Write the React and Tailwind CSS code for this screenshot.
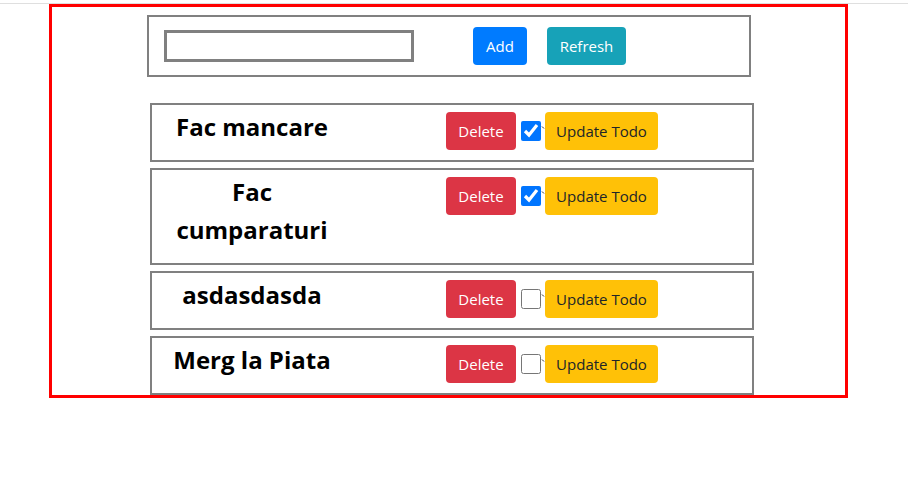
import { useState } from "react";

const initialTodos = [
  { id: 1, title: "Fac mancare", done: true },
  { id: 2, title: "Fac cumparaturi", done: true },
  { id: 3, title: "asdasdasda", done: false },
  { id: 4, title: "Merg la Piata", done: false },
];

function TodoRow({ todo, onToggle }) {
  return (
    <div className="ml-[98px] w-[604px] border-2 border-[#808080] flex items-start">
      {/* title column */}
      <h4 className="ml-[10px] w-[180px] mt-[3px] mb-[14px] text-center text-[24px] leading-[38px] font-bold text-black">
        {todo.title}
      </h4>

      {/* actions */}
      <div className="ml-[104px] mt-[7px] flex items-center">
        <button className="w-[70px] h-[38px] rounded bg-[#dc3545] text-white text-[15px]">
          Delete
        </button>
        <input
          type="checkbox"
          checked={todo.done}
          onChange={() => onToggle(todo.id)}
          className="ml-[5px] w-5 h-5 accent-[#0075ff]"
        />
        <svg width="4" height="38" viewBox="0 0 4 38" className="shrink-0">
          <path d="M1 14.5 L3 16.5" stroke="#333" strokeWidth="1" />
        </svg>
        <button className="w-[113px] h-[38px] rounded bg-[#ffc107] text-[#212529] text-[15px]">
          Update Todo
        </button>
      </div>
    </div>
  );
}

export default function App() {
  const [todos, setTodos] = useState(initialTodos);
  const [text, setText] = useState("");

  const toggle = (id) =>
    setTodos((t) => t.map((x) => (x.id === id ? { ...x, done: !x.done } : x)));

  return (
    <div className="min-h-screen bg-white font-['Open_Sans',sans-serif]">
      <div className="h-[4px] border-b border-[#dfdfdf]" />

      <div className="ml-[49px] w-[799px] border-[3px] border-[#ff0000] pt-[8px]">
        {/* Form */}
        <div className="ml-[95px] w-[604px] h-[62px] border-2 border-[#808080] flex items-center pl-[15px]">
          <input
            value={text}
            onChange={(e) => setText(e.target.value)}
            className="w-[250px] h-[32px] border-[3px] border-[#808080] outline-none px-1"
          />
          <button className="ml-[59px] w-[54px] h-[38px] rounded bg-[#007bff] text-white text-[15px]">
            Add
          </button>
          <button className="ml-[20px] w-[79px] h-[38px] rounded bg-[#17a2b8] text-white text-[15px]">
            Refresh
          </button>
        </div>

        {/* List */}
        <div className="mt-[26px] flex flex-col gap-[6px]">
          {todos.map((t) => (
            <TodoRow key={t.id} todo={t} onToggle={toggle} />
          ))}
        </div>
      </div>
    </div>
  );
}
